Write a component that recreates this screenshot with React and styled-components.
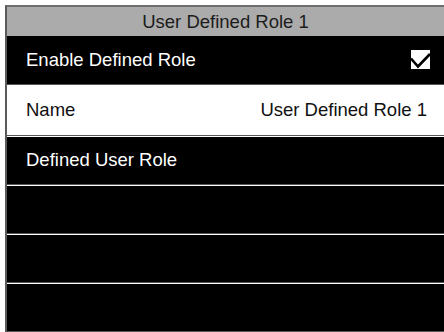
import React from "react";
import styled, { createGlobalStyle } from "styled-components";

const GlobalStyle = createGlobalStyle`
  html, body {
    margin: 0;
    padding: 0;
    background: #ffffff;
    overflow: hidden;
  }
  body {
    font-family: "Liberation Sans", Arial, sans-serif;
  }
`;

const rows = [
  { label: "Enable Defined Role", checked: true },
  { label: "Name", value: "User Defined Role 1", light: true },
  { label: "Defined User Role" },
  { label: "" },
  { label: "" },
  { label: "" },
];

const App = () => {
  return (
    <>
      <GlobalStyle />
      <Screen>
        <Header>User Defined Role 1</Header>
        <List>
          {rows.map((row, i) => (
            <Row key={i} $light={row.light} $first={i === 0}>
              <Label>{row.label}</Label>
              {row.value && <Value>{row.value}</Value>}
              {row.checked && <CheckBox />}
            </Row>
          ))}
        </List>
      </Screen>
    </>
  );
};

const CheckBox = () => (
  <CheckIcon width="19" height="19" viewBox="0 0 19 19">
    <rect x="0" y="0" width="19" height="19" fill="#ffffff" />
    <polyline
      points="0,8.5 7,16.5 19,4"
      fill="none"
      stroke="#000000"
      strokeWidth="2.6"
    />
  </CheckIcon>
);

const Screen = styled.div`
  margin: 5px 0 0 5px;
  height: 327px;
  border-left: 2px solid #5a5a5a;
  border-top: 2px solid #6e6e6e;
  box-sizing: border-box;
  display: flex;
  flex-direction: column;
  background: #000000;
`;

const Header = styled.div`
  height: 29px;
  flex-shrink: 0;
  background: #ababab;
  color: #1c1c1c;
  font-size: 18.5px;
  display: flex;
  align-items: center;
  justify-content: center;
`;

const List = styled.div`
  display: flex;
  flex-direction: column;
`;

const Row = styled.div`
  height: ${(p) => (p.$light ? "51px" : "49px")};
  flex-shrink: 0;
  box-sizing: border-box;
  display: flex;
  align-items: center;
  justify-content: space-between;
  padding: 0 17px 1px 19px;
  background: ${(p) => (p.$light ? "#ffffff" : "#000000")};
  color: ${(p) => (p.$light ? "#111111" : "#ffffff")};
  font-size: 18.5px;
  border-top: ${(p) => (p.$first ? "none" : "1px solid #ffffff")};
  border-bottom: 1px solid #555555;
`;

const Label = styled.span`
  white-space: nowrap;
`;

const Value = styled.span`
  white-space: nowrap;
`;

const CheckIcon = styled.svg`
  display: block;
  margin-right: -3px;
`;

export default App;
